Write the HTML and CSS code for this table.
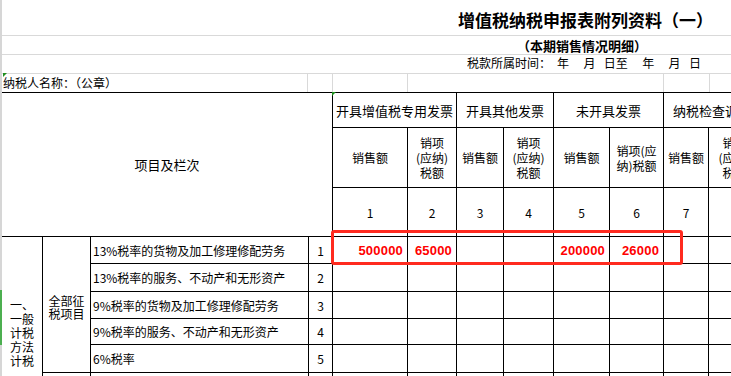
FILE: index.html
```html
<!DOCTYPE html>
<html lang="zh-CN">
<head>
<meta charset="utf-8">
<title>增值税纳税申报表附列资料（一）</title>
<link rel="stylesheet" href="styles.css">
</head>
<body>
<div class="sheet">
  <div class="edge"></div>
  <div class="main">
    <div class="band band-title"><h1 class="title">增值税纳税申报表附列资料（一）</h1></div>
    <div class="band band-sub"><span class="subtitle">（本期销售情况明细）</span></div>
    <div class="band band-period"><span class="period">税款所属时间：&ensp;年&ensp;&ensp;&thinsp;月&ensp;&thinsp;日至&ensp;&ensp;&thinsp;年&ensp;&ensp;&thinsp;月&ensp;&thinsp;日</span></div>
    <div class="band-name">
      <div class="nc nc-1"><i class="mark mark-name"></i>纳税人名称：（公章）</div>
      <div class="nc nc-2"></div>
      <div class="nc nc-3"></div>
      <div class="nc nc-4"></div>
      <div class="nc nc-5"></div>
      <div class="nc nc-6"></div>
    </div>
    <table class="grid">
      <colgroup>
        <col class="c-a"><col class="c-b"><col class="c-c"><col class="c-d">
        <col class="c-e"><col class="c-f"><col class="c-g"><col class="c-h">
        <col class="c-i"><col class="c-j"><col class="c-k"><col class="c-l">
      </colgroup>
      <tr class="r-h1">
        <td class="big" rowspan="3" colspan="4">项目及栏次</td>
        <td class="group" colspan="2"><i class="mark mark-head"></i>开具增值税专用发票</td>
        <td class="group" colspan="2">开具其他发票</td>
        <td class="group" colspan="2">未开具发票</td>
        <td class="group" colspan="2">纳税检查调整</td>
      </tr>
      <tr class="r-h2">
        <td>销售额</td>
        <td class="stack">销项<br>(应纳)<br>税额</td>
        <td>销售额</td>
        <td class="stack">销项<br>(应纳)<br>税额</td>
        <td>销售额</td>
        <td class="stack">销项(应<br>纳)税额</td>
        <td>销售额</td>
        <td class="stack">销项<br>(应纳)<br>税额</td>
      </tr>
      <tr class="r-h3">
        <td>1</td><td>2</td><td>3</td><td>4</td><td>5</td><td>6</td><td>7</td><td>8</td>
      </tr>
      <tr class="r-d1">
        <td class="cat" rowspan="7">一、<br>一般<br>计税<br>方法<br>计税</td>
        <td class="sub" rowspan="5">全部征<br>税项目</td>
        <td class="item">13%税率的货物及加工修理修配劳务</td>
        <td>1</td>
        <td class="val">500000</td>
        <td class="val">65000</td>
        <td></td>
        <td></td>
        <td class="val">200000</td>
        <td class="val">26000</td>
        <td></td>
        <td></td>
      </tr>
      <tr class="r-d2">
        <td class="item">13%税率的服务、不动产和无形资产</td>
        <td>2</td><td></td><td></td><td></td><td></td><td></td><td></td><td></td><td></td>
      </tr>
      <tr class="r-d3">
        <td class="item">9%税率的货物及加工修理修配劳务</td>
        <td>3</td><td></td><td></td><td></td><td></td><td></td><td></td><td></td><td></td>
      </tr>
      <tr class="r-d4">
        <td class="item">9%税率的服务、不动产和无形资产</td>
        <td>4</td><td></td><td></td><td></td><td></td><td></td><td></td><td></td><td></td>
      </tr>
      <tr class="r-d5">
        <td class="item">6%税率</td>
        <td>5</td><td></td><td></td><td></td><td></td><td></td><td></td><td></td><td></td>
      </tr>
      <tr class="r-d6">
        <td class="sub" rowspan="2"></td>
        <td class="item"></td>
        <td>6</td><td></td><td></td><td></td><td></td><td></td><td></td><td></td><td></td>
      </tr>
      <tr class="r-d7">
        <td class="item"></td>
        <td>7</td><td></td><td></td><td></td><td></td><td></td><td></td><td></td><td></td>
      </tr>
    </table>
  </div>
  <div class="callout"></div>
</div>
</body>
</html>
```

FILE: styles.css
```css
html, body {
  margin: 0;
  padding: 0;
  overflow: hidden;
  background: #fff;
}
body {
  width: 731px;
  height: 376px;
  font-family: "Noto Sans CJK SC", "Noto Sans", sans-serif;
  color: #000;
}
.sheet {
  position: relative;
  display: flex;
  height: 376px;
  overflow: hidden;
}
.edge {
  flex: 0 0 2px;
  background: linear-gradient(#d6d6d6 0 290px, #4caf50 290px 345px, #d6d6d6 345px);
}
.main {
  flex: 0 0 759px;
  width: 759px;
}
.band {
  box-sizing: border-box;
  display: flex;
  align-items: center;
  border-bottom: 1px solid #d9d9d9;
}
.band-title {
  height: 36px;
  padding: 4px 0 0 456px;
}
.title {
  margin: 0;
  font-size: 17px;
  font-weight: 700;
  line-height: 17px;
  white-space: nowrap;
}
.band-sub {
  height: 19px;
  padding-left: 515px;
}
.subtitle {
  font-size: 13px;
  font-weight: 700;
  line-height: 13px;
  white-space: nowrap;
}
.band-period {
  height: 19px;
  padding: 0 0 3px 465px;
}
.period {
  font-size: 12px;
  line-height: 12px;
  white-space: nowrap;
}
.band-name {
  display: flex;
  height: 18px;
}
.nc {
  box-sizing: border-box;
  position: relative;
  height: 18px;
  border-right: 1px solid #d9d9d9;
  font-size: 12px;
  line-height: 18px;
  white-space: nowrap;
}
.nc-1 { width: 306px; padding-left: 1px; }
.nc-2 { width: 25px; }
.nc-3 { width: 75px; }
.nc-4 { width: 256px; }
.nc-5 { width: 46px; }
.nc-6 { width: 51px; border-right: 0; }

.mark {
  position: absolute;
  width: 0;
  height: 0;
  border-top: 4px solid #1f8f1f;
  border-right: 4px solid transparent;
}
.mark-name { top: -1px; left: 1px; }
.mark-head { top: -1px; left: -1px; }

.grid {
  border-collapse: separate;
  border-spacing: 0;
  table-layout: fixed;
  width: 759px;
  border-top: 1px solid #000;
}
.c-a { width: 41px; }
.c-b { width: 48px; }
.c-c { width: 218px; }
.c-d { width: 24px; }
.c-e { width: 75px; }
.c-f { width: 49px; }
.c-g { width: 47px; }
.c-h { width: 50px; }
.c-i { width: 56px; }
.c-j { width: 54px; }
.c-k { width: 45px; }
.c-l { width: 52px; }

.grid td {
  box-sizing: border-box;
  position: relative;
  padding: 0;
  border-right: 1px solid #000;
  border-bottom: 1px solid #000;
  font-size: 12px;
  line-height: 15px;
  text-align: center;
  vertical-align: middle;
  white-space: nowrap;
  overflow: hidden;
}
.grid td.group { overflow: visible; }
.r-h1 { height: 35px; }
.r-h2 { height: 60px; }
.r-h3 { height: 49px; }
.r-d1 { height: 27px; }
.r-d2 { height: 28px; }
.r-d3 { height: 27px; }
.r-d4 { height: 26px; }
.r-d5 { height: 28px; }
.r-d6 { height: 27px; }
.r-d7 { height: 27px; }

.grid td.big,
.grid td.group {
  font-size: 13px;
}
.grid td.stack {
  line-height: 15px;
}
.grid td.cat {
  line-height: 14px;
  padding-top: 2px;
}
.grid td.sub {
  line-height: 13px;
  padding-top: 5px;
}
.grid td.item {
  text-align: left;
  padding-left: 2px;
}
.grid td.val {
  text-align: right;
  padding-right: 4px;
  font-family: "Liberation Sans", Arial, sans-serif;
  font-size: 13px;
  font-weight: 700;
  color: #ff0000;
  letter-spacing: 0.2px;
}

.callout {
  position: absolute;
  left: 331px;
  top: 230px;
  width: 352px;
  height: 35px;
  box-sizing: border-box;
  border: 3px solid #ff2a1f;
  border-radius: 3px;
  pointer-events: none;
}
```
